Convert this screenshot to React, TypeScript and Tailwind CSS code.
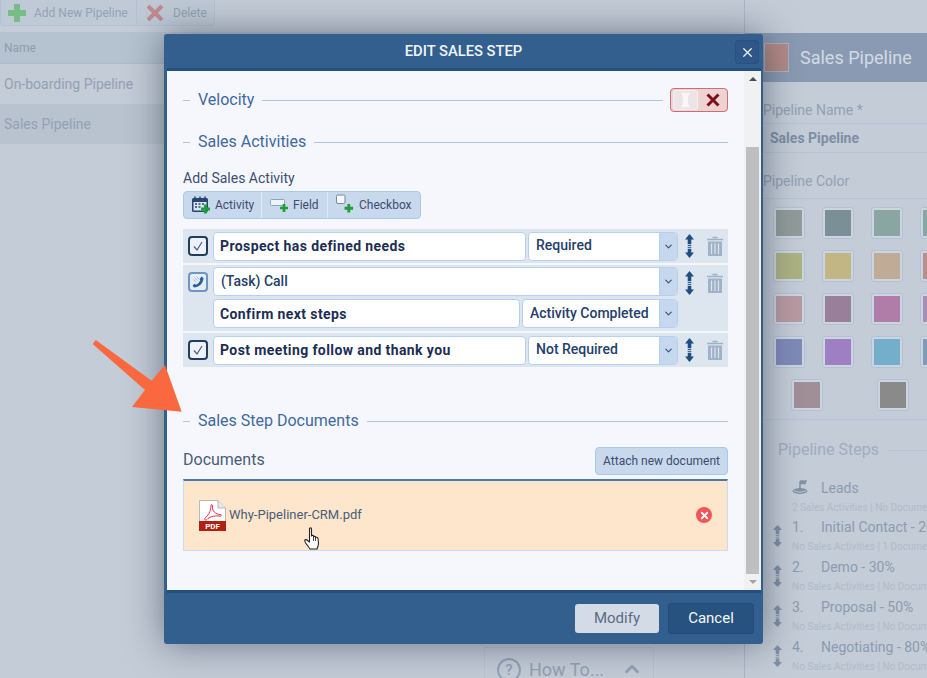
import { ChevronDown, ChevronUp, X } from "lucide-react";

const SWATCHES = [
  ["#919b9a", "#7b9096", "#8aa6a3", "#8aa6a3"],
  ["#adb283", "#c2b784", "#bfab96", "#b88f8c"],
  ["#b89aa3", "#9a7f9a", "#b07da8", "#a68fb3"],
  ["#7f8bb8", "#9d7fc2", "#73aecb", "#8299b8"],
];

const STEPS = [
  ["1.", "Initial Contact - 20%", "No Sales Activities | 1 Document"],
  ["2.", "Demo - 30%", "No Sales Activities | No Documents"],
  ["3.", "Proposal - 50%", "No Sales Activities | No Documents"],
  ["4.", "Negotiating - 80%", "No Sales Activities | No Documents"],
];

function MoveIcon({ color = "#1f4e80", className = "" }: { color?: string; className?: string }) {
  return (
    <svg width="9" height="24" viewBox="0 0 10 26" preserveAspectRatio="none" className={className} aria-hidden="true">
      <path d="M5 0 L10 6 H7 V11 H3 V6 H0 Z" fill={color} />
      <path d="M3 12.5h4M3 14.5h4" stroke={color} strokeWidth="1" />
      <path d="M3 16 H7 V20 H10 L5 26 L0 20 H3 Z" fill={color} />
    </svg>
  );
}

function TrashIcon() {
  return (
    <svg width="16" height="20" viewBox="0 0 16 20" aria-hidden="true">
      <path d="M5.5 1.5h5M0 3.5h16" stroke="#9fb2c8" strokeWidth="1.6" fill="none" />
      <path d="M1 5.5h14V20H1z" fill="#9fb2c8" />
      <path d="M4.5 7.5V18M8 7.5V18M11.500 7.5V18" stroke="#dde5ef" strokeWidth="1.2" />
    </svg>
  );
}

function GreenPlus({ x, y, s = 8 }: { x: number; y: number; s?: number }) {
  const t = s / 3;
  return (
    <path
      d={`M${x + t} ${y}h${t}v${t}h${t}v${t}h${-t}v${t}h${-t}v${-t}h${-t}v${-t}h${t}z`}
      fill="#1f9d38"
    />
  );
}

function CheckTile() {
  return (
    <div className="flex h-[20px] w-[20px] items-center justify-center rounded-[4px] border-2 border-[#223c5e] bg-[#eef2f8]">
      <svg width="12" height="12" viewBox="0 0 12 12" aria-hidden="true">
        <path d="M2 6.500 L5 10 L10 2" stroke="#41618a" strokeWidth="1.200" fill="none" />
      </svg>
    </div>
  );
}

function PhoneTile() {
  return (
    <div className="flex h-[20px] w-[20px] items-center justify-center rounded-[4px] border-2 border-[#6e94c2] bg-[#e6edf6]">
      <svg width="14" height="14" viewBox="0 0 14 14" aria-hidden="true">
        <path
          d="M10.500 1.500 L12.500 3 C12.500 8 8 12.500 3 12.500 L1.500 10.500 L3.500 8.800 L5 9.800 C6.800 8.800 8.300 7.300 9.200 5.500 L8.600 4 Z"
          fill="#2e6097"
        />
        <path d="M5.500 1.500 L8 4M3.500 2.500 L6.500 5.500M2.500 4.500 L5 7" stroke="#a9bcd4" fill="none" />
      </svg>
    </div>
  );
}

function TextBox({ w, children }: { w: string; children: string }) {
  return (
    <div
      className={`flex h-full items-center rounded-[4px] border border-[#b5d0f0] bg-white px-[6px] text-[14px] font-bold tracking-[0.4px] text-[#1b2e54] ${w}`}
    >
      {children}
    </div>
  );
}

function SelectBox({ w, children }: { w: string; children?: string }) {
  return (
    <div className={`flex h-full overflow-hidden rounded-[4px] border border-[#b5d0f0] bg-white ${w}`}>
      <span className="flex flex-1 items-center pl-[7px] text-[14px] font-medium text-[#24406b]">
        {children}
      </span>
      <span className="flex w-[18px] items-center justify-center border-l border-[#b5d0f0] bg-[#c6d8ee]">
        <ChevronDown size={11} strokeWidth={2.500} className="text-[#35557f]" />
      </span>
    </div>
  );
}

function Legend({ children, right }: { children: string; right?: React.ReactNode }) {
  return (
    <div className="flex items-center">
      <span className="h-px w-[7px] bg-[#b0c4da]" />
      <span className="px-[8px] text-[16px] text-[#41699f]">{children}</span>
      <span className="h-px flex-1 bg-[#b0c4da]" />
      {right}
    </div>
  );
}

function RowTools() {
  return (
    <div className="flex w-[50px] items-center pl-[7px]">
      <MoveIcon />
      <span className="ml-[13px]">
        <TrashIcon />
      </span>
    </div>
  );
}

function ActivityRow({ tile, name, status }: { tile: React.ReactNode; name: string; status: string }) {
  return (
    <div className="flex h-[34px] items-center bg-[#dde5ef] pl-[5px]">
      <div className="w-[25px]">{tile}</div>
      <div className="flex h-[29px] w-[465px] gap-[2px]">
        <TextBox w="w-[313px]">{name}</TextBox>
        <SelectBox w="w-[150px] [&>span:first-child]:pb-[2px]">{status}</SelectBox>
      </div>
      <RowTools />
    </div>
  );
}

function CallRow() {
  return (
    <div className="flex h-[66px] bg-[#dde5ef] pl-[5px] pt-[2px]">
      <div className="w-[25px] pt-[5px]">
        <PhoneTile />
      </div>
      <div className="flex w-[465px] flex-col gap-[3px]">
        <div className="h-[29px]">
          <SelectBox w="w-full">(Task) Call</SelectBox>
        </div>
        <div className="flex h-[29px] gap-[2px]">
          <TextBox w="w-[307px] pt-[2px]">Confirm next steps</TextBox>
          <SelectBox w="w-[156px]">Activity Completed</SelectBox>
        </div>
      </div>
      <div className="flex h-[31px]">
        <RowTools />
      </div>
    </div>
  );
}

function AddButton({ icon, label, w }: { icon: React.ReactNode; label: string; w: string }) {
  return (
    <div className={`flex h-full items-center gap-[5px] border-r border-[#e0e9f4] pl-[8px] text-[12px] text-[#3e4b6e] last:border-r-0 ${w}`}>
      {icon}
      {label}
    </div>
  );
}

function PdfIcon() {
  return (
    <svg width="27" height="31" viewBox="0 0 27 31" aria-hidden="true">
      <path d="M.5.500H19L26.500 8V30.500H.5Z" fill="#fff" stroke="#b8b8b8" />
      <path d="M19 .5V8H26.500" fill="#e8e8e8" stroke="#b8b8b8" />
      <path
        d="M6 18 C9 16 12 11 12 6 C12 3.500 14 4.500 13.500 7 C13 11 17 14.500 21 14.500 C23 14.500 23 16.500 20 16 C15 15.500 10 17 8 19.500 C6.500 21 5 19.500 6 18 Z"
        fill="none"
        stroke="#e8304a"
        strokeWidth="1"
      />
      <rect x="0" y="21" width="27" height="10" fill="#b3200e" />
      <text x="13.500" y="29" textAnchor="middle" fontSize="8" fontWeight="700" fill="#fff" fontFamily="Roboto, sans-serif">
        PDF
      </text>
    </svg>
  );
}

function HandCursor() {
  return (
    <svg width="17" height="23" viewBox="0 0 17 23" className="absolute left-[304px] top-[527px]" aria-hidden="true">
      <path
        d="M5.500 2 C5.500 .5 7.500 .5 7.500 2 V9 C7.500 8 9.500 8 9.500 9 V10 C9.500 9 11.500 9 11.500 10 V11 C11.500 10 13.500 10 14 11.500 L14.500 16 C14.500 19 13.500 20 13 22 H6 C5 20 1 16 .8 14 C.5 12.500 2.500 12 3.500 13.500 L5.500 15 Z"
        fill="#fff"
        stroke="#222"
        strokeWidth="1.100"
        strokeLinejoin="round"
      />
      <path d="M9.500 10V14M11.500 11V14" stroke="#222" strokeWidth=".8" />
    </svg>
  );
}

function Modal() {
  return (
    <div className="absolute left-[164px] top-[34px] flex h-[610px] w-[599px] flex-col rounded-[3px] bg-[#335f8e] shadow-[0_0_36px_rgba(20,30,45,0.5)]">
      <div className="relative flex h-[34px] items-center justify-center text-[14.75px] font-medium text-[#f0f4f9]">
        EDIT SALES STEP
        <span className="absolute right-[4px] top-[6px] flex h-[24px] w-[24px] items-center justify-center rounded-[3px] border border-[#2a5080] bg-[#2e5688]">
          <X size={15} strokeWidth={2} className="text-[#f0f4f9]" />
        </span>
      </div>
      <div className="ml-[3px] mr-[2px] flex h-[525px] border-y-[3px] border-[#24507f] bg-[#f5f7fc]">
        <div className="w-[577px] pl-[16px]">
          <div className="flex w-[545px] flex-col">
            <div className="mt-[17px]">
              <Legend
                right={
                  <div className="ml-[7px] flex h-[24px] w-[58px] items-center rounded-[4px] border border-[#c96e72] bg-[#efd3d3] pl-[2px]">
                    <span className="flex h-[20px] w-[25px] items-center justify-center rounded-[2px] border border-[#f7efef] bg-[#ece4e6]">
                      <svg width="9" height="14" viewBox="0 0 9 14" aria-hidden="true">
                        <path d="M0 0H9C6 3 6 11 9 14H0C3 11 3 3 0 0Z" fill="#fbf7f8" />
                      </svg>
                    </span>
                    <svg width="14" height="14" viewBox="0 0 14 14" className="ml-[8px]" aria-hidden="true">
                      <path d="M1.500 1.500 L12.500 12.500 M12.500 1.500 L1.500 12.500" stroke="#7f0f14" strokeWidth="3" />
                    </svg>
                  </div>
                }
              >
                Velocity
              </Legend>
            </div>
            <div className="mt-[18px]">
              <Legend>Sales Activities</Legend>
            </div>
            <div className="mt-[14px] text-[14px] leading-[20px] text-[#3e4f6e]">Add Sales Activity</div>
            <div className="mt-[3px] flex h-[28px] w-[238px] rounded-[4px] border border-[#a9c9ec] bg-[#c8d9ee]">
              <AddButton
                w="w-[78px]"
                label="Activity"
                icon={
                  <svg width="18" height="18" viewBox="0 0 18 17" aria-hidden="true">
                    <rect x="0" y="1.500" width="16" height="14" rx="1.500" fill="#24466f" />
                    <rect x="1.500" y="5.500" width="13" height="8.500" fill="#dbe5f1" />
                    <path d="M3 0v3M8 0v3M13 0v3" stroke="#24466f" strokeWidth="1.500" />
                    <path d="M3 7.500h2M6.500 7.500h2M10 7.500h2M3 10.500h2M6.500 10.500h2" stroke="#24466f" strokeWidth="1.500" />
                    <GreenPlus x={9} y={8} s={9} />
                  </svg>
                }
              />
              <AddButton
                w="w-[66px]"
                label="Field"
                icon={
                  <svg width="18" height="14" viewBox="0 0 18 14" aria-hidden="true">
                    <rect x=".5" y="1.500" width="14" height="6" rx="1" fill="#eef3f9" stroke="#8ea3bd" />
                    <GreenPlus x={10} y={6} s={8} />
                  </svg>
                }
              />
              <AddButton
                w="w-[92px]"
                label="Checkbox"
                icon={
                  <svg width="18" height="20" viewBox="0 0 19 20" className="-mt-[3px]" aria-hidden="true">
                    <rect x=".5" y=".5" width="9" height="9" rx="1.500" fill="#f5f8fc" stroke="#6d819c" />
                    <GreenPlus x={9} y={10} s={9} />
                  </svg>
                }
              />
            </div>
            <div className="mt-[10px] flex flex-col gap-[2px]">
              <ActivityRow tile={<CheckTile />} name="Prospect has defined needs" status="Required" />
              <CallRow />
              <ActivityRow tile={<CheckTile />} name="Post meeting follow and thank you" status="Not Required" />
            </div>
            <div className="mt-[42px]">
              <Legend>Sales Step Documents</Legend>
            </div>
            <div className="mt-[14px] flex h-[32px] items-start justify-between">
              <span className="mt-[3px] text-[16px] leading-[20px] text-[#4a5d78]">Documents</span>
              <span className="flex h-[28px] w-[133px] items-center justify-center rounded-[4px] border border-[#a9c9ec] bg-[#c8d9ee] text-[12px] text-[#3e4b6e]">
                Attach new document
              </span>
            </div>
            <div className="flex h-[72px] items-center border-x border-b border-t-2 border-x-[#c9ddef] border-b-[#c9ddef] border-t-[#4a7aad] bg-[#fee6cc] pb-[1px] pl-[15px] pr-[15px]">
              <PdfIcon />
              <span className="ml-[3px] flex-1 text-[13px] text-[#4a5d78]">Why-Pipeliner-CRM.pdf</span>
              <span className="flex h-[16px] w-[16px] items-center justify-center rounded-full bg-[#f2555a]">
                <X size={11} strokeWidth={4} className="text-white" />
              </span>
            </div>
          </div>
        </div>
        <div className="flex w-[17px] flex-col items-center bg-[#f1f1f1]">
          <span className="mt-[6px] h-0 w-0 border-x-[4px] border-b-[4px] border-x-transparent border-b-[#4d4d4d]" />
          <span className="mt-[66px] h-[427px] w-[13px] bg-[#bfbfbf]" />
          <span className="mt-[6px] h-0 w-0 border-x-[4px] border-t-[4px] border-x-transparent border-t-[#a3a3a3]" />
        </div>
      </div>
      <div className="flex flex-1 items-center justify-end gap-[9px] pr-[9px]">
        <span className="flex h-[29px] w-[84px] items-center justify-center rounded-[3px] bg-[#d3dce6] text-[15px] text-[#5b6b85]">
          Modify
        </span>
        <span className="flex h-[31px] w-[86px] items-center justify-center rounded-[3px] border border-[#234c78] bg-[#27527f] text-[15px] text-[#f5f7fb]">
          Cancel
        </span>
      </div>
    </div>
  );
}

function LeftPane() {
  return (
    <div className="flex w-[744px] shrink-0 flex-col">
      <div className="flex h-[26px] w-[215px] items-center rounded-b-[4px] border-x border-b border-[#b3c2d2] bg-[#bfcad6] text-[12px] text-[#93a2b4]">
        <div className="flex h-full w-[136px] items-center gap-[8px] border-r border-[#b3c2d2] pl-[7px]">
          <svg width="18" height="18" viewBox="0 0 18 18" aria-hidden="true">
            <path d="M6 0h6v6h6v6h-6v6H6v-6H0V6h6z" fill="#78bd87" />
          </svg>
          Add New Pipeline
        </div>
        <div className="flex items-center gap-[9px] pl-[9px]">
          <svg width="18" height="18" viewBox="0 0 18 18" aria-hidden="true">
            <path d="M2 2 L16 16 M16 2 L2 16" stroke="#c28a92" strokeWidth="4" />
          </svg>
          Delete
        </div>
      </div>
      <div className="mt-[6px] flex h-[32px] items-center border-b border-[#aebccb] bg-[#b5c2cf] pl-[4px] text-[12px] text-[#8e9db0]">
        Name
      </div>
      <div className="flex h-[40px] items-center bg-[#c3ccd7] pl-[4px] text-[14px] text-[#93a1b3]">
        On-boarding Pipeline
      </div>
      <div className="flex h-[40px] items-center bg-[#b8c3cf] pl-[4px] text-[14px] text-[#93a1b3]">
        Sales Pipeline
      </div>
      <div className="mt-auto ml-[484px] flex h-[31px] w-[170px] items-start border-x border-t border-[#b8c4d1] bg-[#c3ccd7] pl-[12px] pt-[10px] text-[18px] leading-[24px] text-[#93a1b4]">
        <span className="flex h-[24px] w-[24px] shrink-0 items-center justify-center rounded-full border-2 border-[#93a1b4] text-[15px] font-medium">
          ?
        </span>
        <span className="ml-[8px]">How To...</span>
        <ChevronUp size={22} strokeWidth={3} className="ml-[17px]" />
      </div>
    </div>
  );
}

function Swatch({ color }: { color: string }) {
  return (
    <span className="h-[32px] w-[32px] shrink-0 rounded-[3px] border border-[#b2c2d6] bg-[#ccd4de] p-[2px]">
      <span className="block h-full w-full" style={{ background: color }} />
    </span>
  );
}

function RightPane() {
  return (
    <div className="flex w-[183px] shrink-0 flex-col border-l border-[#aab8c8] bg-[#c3ccd7]">
      <div className="mt-[33px] flex h-[49px] items-center bg-[#8a9ab3] pl-[19px] text-[18px] whitespace-nowrap text-[#d3dae3]">
        <span className="h-[29px] w-[25px] shrink-0 border border-[#a9b3c1] bg-[#b38a87]" />
        <span className="ml-[11px]">Sales Pipeline</span>
      </div>
      <div className="pl-[18px]">
        <div className="mt-[18px] text-[14px] leading-[20px] text-[#93a1b4]">Pipeline Name *</div>
        <div className="mt-[3px] flex h-[30px] items-center border-y border-[#b4c5d8] pl-[7px] text-[14px] font-bold text-[#7e8ea5]">
          Sales Pipeline
        </div>
        <div className="mt-[18px] text-[14px] leading-[20px] text-[#93a1b4]">Pipeline Color</div>
        <div className="mt-[7px] border-t border-[#b4c5d8]" />
      </div>
      <div className="mt-[8px] flex w-[230px] flex-wrap gap-x-[17px] gap-y-[11px] pl-[28px]">
        {SWATCHES.flat().map((c, i) => (
          <Swatch key={i} color={c} />
        ))}
      </div>
      <div className="mt-[11px] flex gap-[54px] pl-[46px]">
        <Swatch color="#a08f96" />
        <Swatch color="#8a8a8a" />
      </div>
      <div className="mt-[8px] border-t border-[#b4c5d8]" />
      <div className="mt-[20px] flex items-center pl-[33px] text-[16px] leading-[20px] whitespace-nowrap text-[#a0adc0]">
        Pipeline Steps
        <span className="ml-[8px] h-px flex-1 bg-[#b4c5d8]" />
      </div>
      <div className="mt-[18px] flex h-[20px] items-center pl-[47px] text-[14px] text-[#8d9bb0]">
        <svg width="16" height="16" viewBox="0 0 16 16" className="shrink-0" aria-hidden="true">
          <path d="M8 1V9M8 1H14L13 3.500H8" stroke="#8492a8" strokeWidth="1.500" fill="#8492a8" />
          <ellipse cx="8" cy="11" rx="7.500" ry="3" fill="#8492a8" />
          <path d="M2 10.500C4 12.500 12 12.500 14 10.500" stroke="#c3ccd7" fill="none" />
        </svg>
        <span className="ml-[13px]">Leads</span>
      </div>
      <div className="mt-[1px] whitespace-nowrap pl-[47px] text-[10px] leading-[18px] text-[#b0bbc9]">
        2 Sales Activities | No Documents
      </div>
      {STEPS.map(([n, name, sub]) => (
        <div key={n} className="relative h-[40px] whitespace-nowrap pl-[47px]">
          <div className="flex h-[20px] items-center text-[14px] text-[#8d9bb0]">
            <span className="w-[29px] shrink-0">{n}</span>
            {name}
          </div>
          <div className="text-[10px] leading-[20px] text-[#b0bbc9]">{sub}</div>
          <MoveIcon color="#7f90a8" className="absolute left-[28px] top-[8px] h-[22px]" />
        </div>
      ))}
    </div>
  );
}

export default function App() {
  return (
    <div className="relative flex h-[678px] w-[927px] overflow-hidden bg-[#c3ccd7] font-['Roboto',sans-serif]">
      <LeftPane />
      <RightPane />
      <Modal />
      {/* annotation arrow, sits over the dialog edge */}
      <svg width="927" height="678" className="pointer-events-none absolute left-0 top-0" aria-hidden="true">
        <polygon points="95.700,340 151.700,380.700 165,365 181.700,411.700 132,407 145,390 92.700,344" fill="#f9683f" />
      </svg>
      <HandCursor />
    </div>
  );
}
